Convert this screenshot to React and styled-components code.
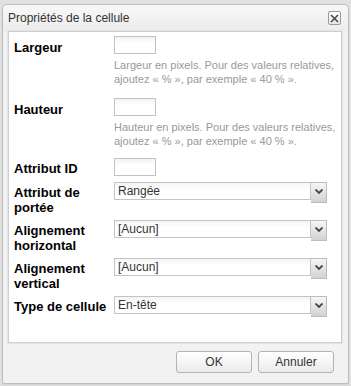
import styled, { createGlobalStyle } from 'styled-components';

const GlobalStyle = createGlobalStyle`
  html, body {
    margin: 0;
    padding: 0;
    background: #e2e2e2;
    font-family: "Liberation Sans", Arial, sans-serif;
  }
`;

const Page = styled.div`
  width: 351px;
  height: 386px;
  padding: 4px 0 0 2px;
  box-sizing: border-box;
`;

const Dialog = styled.div`
  width: 347px;
  height: 380px;
  box-sizing: border-box;
  border: 1px solid #bdbdbd;
  border-radius: 5px 5px 2px 2px;
  background: #f2f2f2;
  display: flex;
  flex-direction: column;
  box-shadow: 0 1px 2px rgba(0, 0, 0, 0.08);
`;

const TitleBar = styled.div`
  height: 26px;
  display: flex;
  align-items: center;
  justify-content: space-between;
  padding: 0 7px 0 5px;
  background: linear-gradient(#f8f8f8, #ececec);
  border-radius: 5px 5px 0 0;
`;

const Title = styled.span`
  font-size: 12px;
  color: #333;
`;

const Close = styled.button`
  width: 13px;
  height: 14px;
  padding: 0;
  border: 1px solid #9a9a9a;
  border-radius: 2px;
  background: linear-gradient(#ffffff, #e6e6e6);
  display: flex;
  align-items: center;
  justify-content: center;
`;

const Panel = styled.div`
  margin: 0 6px 0 5px;
  height: 312px;
  box-sizing: border-box;
  background: #fff;
  border: 1px solid #cfcfcf;
  box-shadow: 0 0 0 1px #e4e4e4;
  padding: 4px 5px 0 5px;
`;

const Row = styled.div`
  display: flex;
  margin-bottom: ${(p) => p.$space}px;
`;

const Label = styled.div`
  width: 100px;
  flex-shrink: 0;
  padding-top: ${(p) => p.$top ?? 3}px;
  font-size: 13px;
  line-height: 15px;
  font-weight: bold;
  color: #000;
`;

const Field = styled.div`
  flex: 1;
`;

const TextInput = styled.div`
  width: 42px;
  height: 18px;
  box-sizing: border-box;
  border: 1px solid #c2c2c2;
  background: linear-gradient(#f3f3f3, #ffffff 40%);
`;

const Help = styled.div`
  margin-top: 4px;
  font-size: 11px;
  line-height: 14px;
  color: #999;
`;

const Select = styled.div`
  width: 213px;
  display: flex;
  align-items: flex-start;
`;

const SelectBox = styled.div`
  flex: 1;
  height: 18px;
  box-sizing: border-box;
  border: 1px solid #c4c4c4;
  background: linear-gradient(#f4f4f4, #ffffff 45%);
  font-size: 12px;
  line-height: 16px;
  padding-left: 3px;
  color: #333;
`;

const SelectButton = styled.div`
  width: 16px;
  height: 21px;
  box-sizing: border-box;
  border: 1px solid #bcbcbc;
  border-left: none;
  background: linear-gradient(#f6f6f6, #d2d2d2);
  display: flex;
  justify-content: center;
  padding-top: 6px;
`;

const Footer = styled.div`
  flex: 1;
  display: flex;
  justify-content: flex-end;
  align-items: flex-start;
  gap: 6px;
  padding: 8px 14px 0 0;
`;

const Button = styled.button`
  width: 76px;
  height: 22px;
  border: 1px solid #b3b3b3;
  border-radius: 3px;
  background: linear-gradient(#ffffff, #ebebeb);
  font-family: "Liberation Sans", Arial, sans-serif;
  font-size: 12px;
  color: #333;
  padding: 0;
`;

const Chevron = () => (
  <svg width="8" height="5" viewBox="0 0 8 5">
    <path d="M0.5 0.5 L4 4 L7.5 0.5" stroke="#444" strokeWidth="1.8" fill="none" />
  </svg>
);

const Dropdown = ({ value }) => (
  <Select>
    <SelectBox>{value}</SelectBox>
    <SelectButton>
      <Chevron />
    </SelectButton>
  </Select>
);

const hint = (name) =>
  `${name} en pixels. Pour des valeurs relatives, ajoutez « % », par exemple « 40 % ».`;

export default function App() {
  return (
    <Page>
      <GlobalStyle />
      <Dialog>
        <TitleBar>
          <Title>Propriétés de la cellule</Title>
          <Close>
            <svg width="9" height="9" viewBox="0 0 9 9">
              <path d="M1 1 L8 8 M8 1 L1 8" stroke="#444" strokeWidth="1.5" />
            </svg>
          </Close>
        </TitleBar>
        <Panel>
          <Row $space={12}>
            <Label $top={4}>Largeur</Label>
            <Field>
              <TextInput />
              <Help>{hint('Largeur')}</Help>
            </Field>
          </Row>
          <Row $space={10}>
            <Label $top={4}>Hauteur</Label>
            <Field>
              <TextInput />
              <Help>{hint('Hauteur')}</Help>
            </Field>
          </Row>
          <Row $space={6}>
            <Label>Attribut ID</Label>
            <Field>
              <TextInput />
            </Field>
          </Row>
          <Row $space={5}>
            <Label>Attribut de portée</Label>
            <Field>
              <Dropdown value="Rangée" />
            </Field>
          </Row>
          <Row $space={5}>
            <Label>Alignement horizontal</Label>
            <Field>
              <Dropdown value="[Aucun]" />
            </Field>
          </Row>
          <Row $space={5}>
            <Label>Alignement vertical</Label>
            <Field>
              <Dropdown value="[Aucun]" />
            </Field>
          </Row>
          <Row $space={0}>
            <Label>Type de cellule</Label>
            <Field>
              <Dropdown value="En-tête" />
            </Field>
          </Row>
        </Panel>
        <Footer>
          <Button>OK</Button>
          <Button>Annuler</Button>
        </Footer>
      </Dialog>
    </Page>
  );
}
